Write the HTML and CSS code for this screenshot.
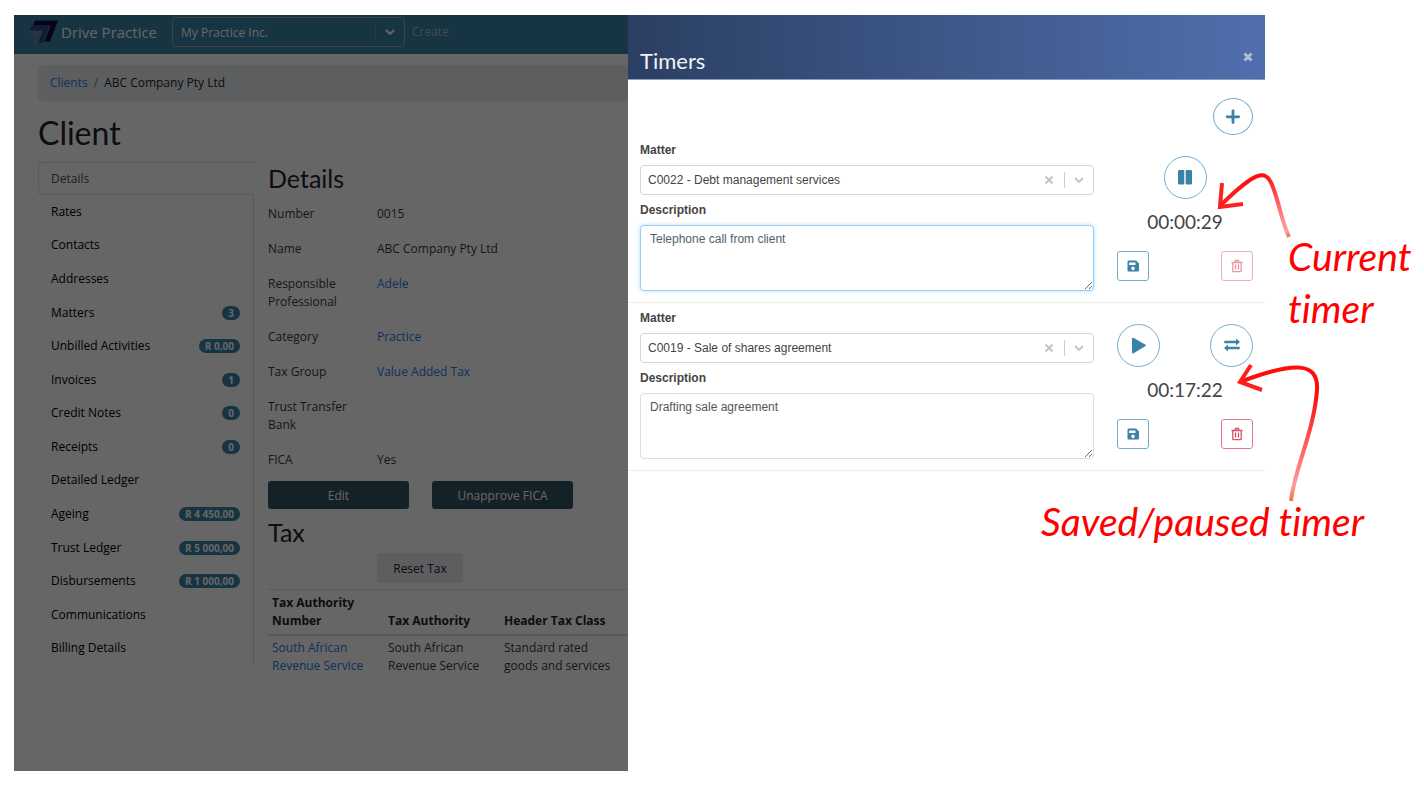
FILE: index.html
```html
<!DOCTYPE html>
<html lang="en">
<head>
    <meta charset="utf-8">
    <title>Drive Practice - Timers</title>
    <link rel="stylesheet" href="styles.css">
</head>
<body>
    <div class="page">
        <div class="screen">
            <div class="app">
                <header class="navbar">
                    <a class="brand" href="#">
                        <svg class="logo" viewBox="0 0 30 25">
                            <path fill="#120c40" d="M7 .5h23l-8 21h-5.500l6-16h-17.500z"/>
                            <path fill="#2b4a85" d="M3.500 6h18l-6.500 17h-5l5-12.500h-13.500z"/>
                            <path fill="#5f83a6" d="M0 11h14.500l-5.500 13.500h-4.500l3.500-9.500h-6.500z"/>
                        </svg>
                        <span>Drive Practice</span>
                    </a>
                    <div class="practice">
                        <select aria-label="Practice">
                            <option>My Practice Inc.</option>
                        </select>
                        <svg class="chevron" viewBox="0 0 10 6"><path d="M1 1l4 4 4-4"/></svg>
                    </div>
                    <a class="create" href="#">Create</a>
                </header>

                <div class="content">
                    <nav class="breadcrumb" aria-label="Breadcrumb">
                        <a href="#">Clients</a><span class="slash">/</span><span>ABC Company Pty Ltd</span>
                    </nav>
                    <h1>Client</h1>
                    <div class="columns">
                        <nav class="tabs" aria-label="Client sections">
                            <a class="active" href="#">Details</a>
                            <a href="#">Rates</a>
                            <a href="#">Contacts</a>
                            <a href="#">Addresses</a>
                            <a href="#">Matters <span class="badge">3</span></a>
                            <a href="#">Unbilled Activities <span class="badge">R 0,00</span></a>
                            <a href="#">Invoices <span class="badge">1</span></a>
                            <a href="#">Credit Notes <span class="badge">0</span></a>
                            <a href="#">Receipts <span class="badge">0</span></a>
                            <a href="#">Detailed Ledger</a>
                            <a href="#">Ageing <span class="badge">R 4 450,00</span></a>
                            <a href="#">Trust Ledger <span class="badge">R 5 000,00</span></a>
                            <a href="#">Disbursements <span class="badge">R 1 000,00</span></a>
                            <a href="#">Communications</a>
                            <a href="#">Billing Details</a>
                        </nav>
                        <main class="details">
                            <h2>Details</h2>
                            <dl>
                                <dt>Number</dt><dd>0015</dd>
                                <dt>Name</dt><dd>ABC Company Pty Ltd</dd>
                                <dt>Responsible Professional</dt><dd><a href="#">Adele</a></dd>
                                <dt>Category</dt><dd><a href="#">Practice</a></dd>
                                <dt>Tax Group</dt><dd><a href="#">Value Added Tax</a></dd>
                                <dt>Trust Transfer Bank</dt><dd></dd>
                                <dt>FICA</dt><dd>Yes</dd>
                            </dl>
                            <div class="actions">
                                <button type="button">Edit</button>
                                <button type="button">Unapprove FICA</button>
                            </div>
                            <h2 class="tax-title">Tax</h2>
                            <button class="reset" type="button">Reset Tax</button>
                            <table>
                                <thead>
                                    <tr>
                                        <th>Tax Authority Number</th>
                                        <th>Tax Authority</th>
                                        <th>Header Tax Class</th>
                                    </tr>
                                </thead>
                                <tbody>
                                    <tr>
                                        <td><a href="#">South African Revenue Service</a></td>
                                        <td>South African Revenue Service</td>
                                        <td>Standard rated goods and services</td>
                                    </tr>
                                </tbody>
                            </table>
                        </main>
                    </div>
                </div>
                <div class="backdrop"></div>
            </div>

            <aside class="drawer">
                <header class="drawer-header">
                    <h2>Timers</h2>
                    <button class="close" type="button" aria-label="Close">
                        <svg viewBox="0 0 10 10"><path d="M1.500 1.500l7 7M8.500 1.500l-7 7"/></svg>
                    </button>
                </header>

                <div class="toolbar">
                    <button class="round add" type="button" aria-label="Add timer">
                        <svg viewBox="0 0 16 16"><path d="M8 2v11.500M2.200 7.800h11.500" fill="none" stroke="currentColor" stroke-width="2.800" stroke-linecap="round"/></svg>
                    </button>
                </div>

                <section class="timer">
                    <div class="fields">
                        <label for="matter1">Matter</label>
                        <div class="select">
                            <select id="matter1"><option>C0022 - Debt management services</option></select>
                            <button type="button" aria-label="Clear matter"><svg viewBox="0 0 8 8"><path d="M.5 .5l7 7M7.500 .5l-7 7"/></svg></button>
                            <svg class="chevron" viewBox="0 0 10 6"><path d="M1 1l4 4 4-4"/></svg>
                        </div>
                        <label for="desc1">Description</label>
                        <textarea id="desc1" class="focused">Telephone call from client</textarea>
                    </div>
                    <div class="controls">
                        <div class="round-row single">
                            <button class="round" type="button" aria-label="Pause">
                                <svg viewBox="0 0 16 16" fill="currentColor"><rect x="1" y="0" width="6.300" height="14.500" rx="1.200"/><rect x="8.700" y="0" width="6.300" height="14.500" rx="1.200"/></svg>
                            </button>
                        </div>
                        <div class="time">00:00:29</div>
                        <div class="small-row">
                            <button class="small" type="button" aria-label="Save">
                                <svg viewBox="0 0 14 14" fill="currentColor" fill-rule="evenodd"><path d="M2.500 1.500h7.500l3 3v7a1 1 0 0 1-1 1h-9.500a1 1 0 0 1-1-1v-9a1 1 0 0 1 1-1zM3 3.500v2.500h6.500v-2.500zM7 7.500a1.800 1.800 0 1 0 .01 0z"/></svg>
                            </button>
                            <button class="small danger disabled" type="button" aria-label="Delete" disabled>
                                <svg viewBox="0 0 14 14" fill="none" stroke="currentColor" stroke-width="1.300"><path d="M1.500 3.500h11M4.800 3.500l.8-2h2.800l.8 2M2.800 3.500v8.500q0 .7.700.7h7q.7 0 .7-.7v-8.500M5.500 5.500v5M8.500 5.500v5"/></svg>
                            </button>
                        </div>
                    </div>
                </section>

                <section class="timer">
                    <div class="fields">
                        <label for="matter2">Matter</label>
                        <div class="select">
                            <select id="matter2"><option>C0019 - Sale of shares agreement</option></select>
                            <button type="button" aria-label="Clear matter"><svg viewBox="0 0 8 8"><path d="M.5 .5l7 7M7.500 .5l-7 7"/></svg></button>
                            <svg class="chevron" viewBox="0 0 10 6"><path d="M1 1l4 4 4-4"/></svg>
                        </div>
                        <label for="desc2">Description</label>
                        <textarea id="desc2">Drafting sale agreement</textarea>
                    </div>
                    <div class="controls">
                        <div class="round-row">
                            <button class="round" type="button" aria-label="Start">
                                <svg viewBox="0 0 16 16" fill="currentColor"><path d="M1 .5v14q0 1.500 1.200.9l12.300-7.300q.9-.7 0-1.400l-12.300-7.100q-1.200-.6-1.200.9z"/></svg>
                            </button>
                            <button class="round" type="button" aria-label="Switch to this timer">
                                <svg viewBox="0 0 16 16" fill="currentColor"><path d="M.3 2.800h11.700v-2.300l4 3.500-4 3.500v-2.300h-11.700zM15.700 8.800h-11.700v-2.300l-4 3.500 4 3.500v-2.300h11.700z"/></svg>
                            </button>
                        </div>
                        <div class="time">00:17:22</div>
                        <div class="small-row">
                            <button class="small" type="button" aria-label="Save">
                                <svg viewBox="0 0 14 14" fill="currentColor" fill-rule="evenodd"><path d="M2.500 1.500h7.500l3 3v7a1 1 0 0 1-1 1h-9.500a1 1 0 0 1-1-1v-9a1 1 0 0 1 1-1zM3 3.500v2.500h6.500v-2.500zM7 7.500a1.800 1.800 0 1 0 .01 0z"/></svg>
                            </button>
                            <button class="small danger" type="button" aria-label="Delete">
                                <svg viewBox="0 0 14 14" fill="none" stroke="currentColor" stroke-width="1.300"><path d="M1.500 3.500h11M4.800 3.500l.8-2h2.800l.8 2M2.800 3.500v8.500q0 .7.700.7h7q.7 0 .7-.7v-8.500M5.500 5.500v5M8.500 5.500v5"/></svg>
                            </button>
                        </div>
                    </div>
                </section>
            </aside>
        </div>

        <!-- callouts drawn over the screen -->
        <svg class="arrow arrow-current" viewBox="0 0 100 80">
            <defs>
                <linearGradient id="fade1" gradientUnits="userSpaceOnUse" x1="60" y1="15" x2="90" y2="77">
                    <stop offset="0" stop-color="#ff0d0d"/>
                    <stop offset="0.75" stop-color="#ff8f8f"/>
                    <stop offset="0.9" stop-color="#ff9c9c"/>
                    <stop offset="1" stop-color="#f0783c"/>
                </linearGradient>
            </defs>
            <path stroke="url(#fade1)" d="M89 77C82 62 80 47 74 30C69 15 64 11 50 20C38 28 30 36 20 46"/>
            <path stroke="#ff1f1f" d="M22 23L20 47L43 44"/>
        </svg>
        <svg class="arrow arrow-saved" viewBox="0 0 100 150">
            <defs>
                <linearGradient id="fade2" gradientUnits="userSpaceOnUse" x1="80" y1="35" x2="61" y2="141">
                    <stop offset="0" stop-color="#ff0d0d"/>
                    <stop offset="0.85" stop-color="#ff9c9c"/>
                    <stop offset="1" stop-color="#f0783c"/>
                </linearGradient>
            </defs>
            <path stroke="url(#fade2)" d="M61 141C64 110 84 72 87 30C89 2 65 1 10 22"/>
            <path stroke="#ff1f1f" d="M21 5L10 22L32 30"/>
        </svg>
        <p class="note note-current">Current<br>timer</p>
        <p class="note note-saved">Saved/paused timer</p>
    </div>
</body>
</html>
```
FILE: styles.css
```css
* { box-sizing: border-box; }
body { margin: 0; background-color: #fff; font-family: Lato, sans-serif; font-size: 13px; line-height: 18px; color: #212529; }
h1, h2, p, dl, dd { margin: 0; font-weight: normal; }
a { color: #2878e6; text-decoration: none; }
button, select, textarea { font-family: inherit; font-size: inherit; }
svg { display: block; }

.page { position: relative; min-height: 100vh; padding: 15px 159px 21px 14px; display: flex; }
.screen { flex: 1; display: grid; grid-template-columns: 614fr 637fr; }

/* client page */
.app { position: relative; overflow: hidden; font-family: "Open Sans", sans-serif; font-size: 12px; }
.backdrop { position: absolute; inset: 0; background-color: rgba(0, 0, 0, 0.6); }
.navbar { display: flex; align-items: center; height: 39px; padding: 0 14px 5px; background-color: #3a82a6; }
.brand { display: flex; align-items: center; gap: 3px; width: 144px; color: #fff; font-size: 15px; white-space: nowrap; }
.logo { width: 30px; height: 25px; }
.practice { display: flex; align-items: center; width: 233px; height: 30px; padding-right: 9px; border: 1px solid #a0a8ac; border-radius: 4px; }
.practice select { flex: 1; height: 20px; padding: 0 8px; appearance: none; border: 0; border-right: 1px solid #5c93ae; background: none; color: #fff; }
.chevron { width: 10px; height: 6px; margin-left: 9px; fill: none; stroke: #fff; stroke-width: 2; }
.create { margin-left: 7px; color: #a5bfcc; }
.content { padding: 11px 0 0 24px; }
.breadcrumb { display: flex; gap: 6px; height: 36px; padding: 9px 12px; border-radius: 4px; background-color: #e9ecef; }
.slash { color: #6c757d; }
h1 { margin-top: 14px; font-family: Lato, sans-serif; font-size: 32px; line-height: 36px; }
.columns { display: flex; margin-top: 11px; }
.tabs { display: flex; flex-direction: column; width: 216px; height: 503px; }
.tabs a { flex: 1; display: flex; justify-content: space-between; align-items: center; padding: 0 13px; border-right: 1px solid #dee2e6; color: #000; }
.tabs .active { flex: 0 0 33px; border: 1px solid #dee2e6; border-right: 0; border-radius: 4px 0 0 4px; padding: 0 12px; color: #495057; }
.badge { padding: 0 6px; border-radius: 7px; background-color: #3a82a6; color: #fff; font-size: 10px; font-weight: bold; line-height: 14px; }
.details { flex: 1; padding-left: 14px; color: #343a40; }
h2 { font-family: Lato, sans-serif; font-size: 25px; line-height: 32px; color: #212529; }
dl { display: grid; grid-template-columns: 99px 1fr; column-gap: 10px; row-gap: 17px; margin-top: 11px; }
.actions { display: flex; gap: 23px; margin-top: 12px; }
.actions button { width: 141px; height: 28px; border: 0; border-radius: 3px; background-color: #345462; color: #fff; }
.tax-title { margin-top: 7px; }
.reset { display: block; width: 86px; height: 30px; margin: 5px 0 6px 109px; border: 0; border-radius: 3px; background-color: #e9ecef; color: #212529; }
table { width: 100%; table-layout: fixed; border-collapse: collapse; }
th, td { padding: 4px; text-align: left; vertical-align: top; border-top: 1px solid #dee2e6; }
td { padding-top: 3px; }
th { vertical-align: bottom; border-bottom: 2px solid #dee2e6; color: #212529; }
th:nth-child(-n+2) { width: 116px; }

/* timers drawer */
.drawer { background-color: #fff; color: #444; }
.drawer-header { display: flex; justify-content: space-between; height: 65px; padding: 30px 12px 0; border-bottom: 1px solid #8c9cc4; background: linear-gradient(to right, #2b3f62, #516fae); }
.drawer-header h2 { color: #f0f2f6; font-size: 22px; }
.close { width: 10px; height: 10px; margin: 7px 0; padding: 0; border: 0; background: none; }
.close svg { width: 10px; height: 10px; stroke: #b0bbd8; stroke-width: 3; }
.toolbar { display: flex; justify-content: flex-end; padding: 18px 12px 0; }
.round { display: flex; align-items: center; justify-content: center; width: 43px; height: 43px; padding: 0; border: 1px solid #74acc9; border-radius: 50%; background: none; color: #3a82a6; }
.round svg { width: 16px; height: 16px; }
.add { width: 40px; height: 37px; }
.timer { display: flex; gap: 23px; height: 168px; padding: 5px 12px 0; border-bottom: 1px solid #ececec; }
.fields { flex: 1; font-family: "Liberation Sans", Arial, sans-serif; font-size: 12px; }
.fields label { display: block; margin-bottom: 5px; font-weight: bold; line-height: 20px; }
.select { display: flex; align-items: center; height: 30px; margin-bottom: 5px; padding-right: 9px; border: 1px solid #d5d5d5; border-radius: 4px; }
.select select { flex: 1; padding: 0 7px; appearance: none; border: 0; background: none; color: #444; }
.select button { width: 24px; height: 16px; padding: 0 11px 0 4px; border: 0; border-right: 1px solid #ccc; background: none; }
.select svg { width: 8px; height: 8px; stroke: #c4c4c4; stroke-width: 2; }
.select .chevron { width: 10px; height: 6px; }
textarea { display: block; width: 100%; height: 66px; padding: 4px 9px; border: 1px solid #ddd; border-radius: 4px; color: #555; line-height: 18px; resize: vertical; }
.focused { border-color: #9accf8; box-shadow: 0 0 4px #b5dcff; color: #4d646c; }
.controls { width: 136px; padding-top: 16px; }
.round-row, .small-row { display: flex; justify-content: space-between; }
.single { justify-content: center; }
.time { margin: 9px 0 15px; text-align: center; font-size: 19px; line-height: 28px; }
.small { display: flex; align-items: center; justify-content: center; width: 32px; height: 30px; padding: 0; border: 1px solid #74acc9; border-radius: 3px; background: none; color: #3a82a6; }
.small svg { width: 14px; height: 14px; }
.danger { border-color: #e27a8c; color: #dc5068; }
.disabled { opacity: 0.6; }

/* callouts */
.arrow { position: absolute; fill: none; stroke-width: 4; }
.arrow-current { top: 160px; right: 124px; width: 100px; height: 80px; }
.arrow-saved { top: 360px; right: 94px; width: 100px; height: 150px; }
.note { position: absolute; color: #f00; font-size: 39px; font-style: italic; font-weight: 400; line-height: 52px; white-space: nowrap; font-variant-ligatures: none; }
.note-current { top: 230px; left: calc(100% - 136px); }
.note-saved { top: 495px; right: 60px; }
```
